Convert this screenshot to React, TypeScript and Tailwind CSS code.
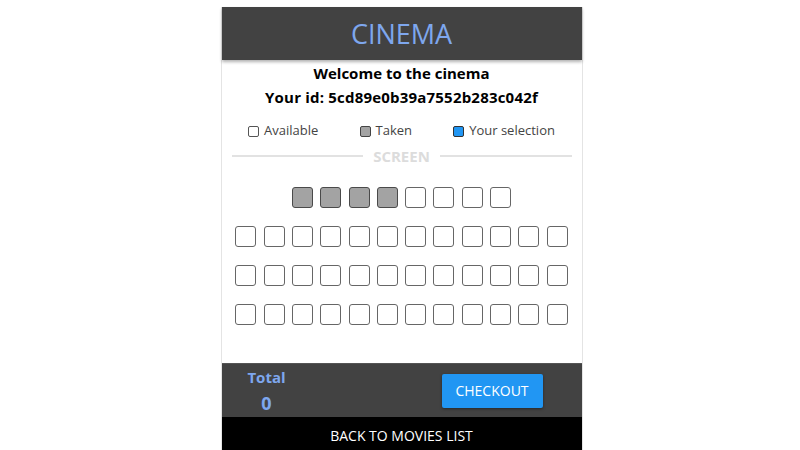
import React from 'react';

const TAKEN = new Set<string>(['0-0', '0-1', '0-2', '0-3']);
const ROWS = [8, 12, 12, 12];

const Seat: React.FC<{ taken?: boolean }> = ({ taken }) => (
  <div
    className={
      taken
        ? 'w-[21px] h-[21px] rounded-[3px] border-[1.5px] border-[#4a4a4a] bg-[#a3a3a3]'
        : 'w-[21px] h-[21px] rounded-[3px] border-[1.5px] border-[#666] bg-white'
    }
  />
);

const LegendItem: React.FC<{ box: string; label: string }> = ({ box, label }) => (
  <div className="flex items-center">
    <span className={`w-[11px] h-[11px] rounded-[2px] border ${box}`} />
    <span className="ml-[5px]">{label}</span>
  </div>
);

const App: React.FC = () => {
  return (
    <div className="min-h-screen bg-white flex justify-center pl-[3px] pt-[7px] font-['Open_Sans','Noto_Sans',sans-serif]">
      <div className="w-[362px] border-x border-[#e4e4e4] flex flex-col">
        <div className="h-[53px] bg-[#424242] flex items-center justify-center shadow-[0_2px_3px_rgba(0,0,0,0.3)] relative z-10">
          <h1 className="text-[27px] text-[#7ea7ee] leading-none">CINEMA</h1>
        </div>

        <div className="h-[303px] flex flex-col pt-[1px]">
          <div className="text-center text-black font-bold text-[15px] leading-[24px]">
            <div>Welcome to the cinema</div>
            <div className="tracking-[0.2px]">Your id: 5cd89e0b39a7552b283c042f</div>
          </div>

          <div className="mt-[12px] h-5 flex items-center justify-around px-[6px] text-[13px] text-[#444]">
            <LegendItem box="border-[#555] bg-white" label="Available" />
            <LegendItem box="border-[#444] bg-[#a3a3a3]" label="Taken" />
            <LegendItem box="border-[#333] bg-[#2196f3]" label="Your selection" />
          </div>

          <div className="mt-[5px] h-5 flex items-center px-[10px]">
            <div className="flex-1 h-[2px] bg-[#e2e2e2]" />
            <span className="mx-[10px] text-[15px] font-bold text-[#dcdcdc]">SCREEN</span>
            <div className="flex-1 h-[2px] bg-[#e2e2e2]" />
          </div>

          <div className="mt-[21px] flex flex-col items-center gap-[18px]">
            {ROWS.map((count, r) => (
              <div key={r} className="flex gap-[7.3px]">
                {Array.from({ length: count }).map((_, c) => (
                  <Seat key={c} taken={TAKEN.has(`${r}-${c}`)} />
                ))}
              </div>
            ))}
          </div>
        </div>

        <div className="h-[54px] bg-[#424242] flex items-center border-t border-[#555]">
          <div className="ml-[27px] w-[36px] flex flex-col items-center text-[#7ea7ee] font-bold">
            <span className="text-[15px] leading-[26px]">Total</span>
            <span className="text-[18px] leading-[27px]">0</span>
          </div>
          <button className="ml-auto mr-[39px] w-[101px] h-[34px] bg-[#2196f3] text-white text-[14px] rounded-[2px] shadow-[0_1px_3px_rgba(0,0,0,0.4)]">
            CHECKOUT
          </button>
        </div>

        <button className="h-[36px] bg-black text-white text-[14px] w-full">BACK TO MOVIES LIST</button>
      </div>
    </div>
  );
};

export default App;
